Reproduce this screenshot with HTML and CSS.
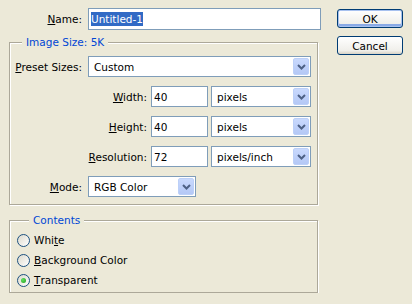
FILE: index.html
```html
<!DOCTYPE html>
<html lang="en">
<head>
  <meta charset="UTF-8">
  <title>New</title>
  <link rel="stylesheet" href="styles.css">
</head>
<body>

  <div class="dialog">
    <div class="main">
      <div class="row name-row">
        <label class="lbl lbl-short"><u>N</u>ame:</label>
        <div class="field name-field"><span class="sel">Untitled-1</span></div>
      </div>

      <fieldset class="group size-group">
        <legend>Image Size: 5K</legend>

        <div class="row">
          <label class="lbl lbl-short"><u>P</u>reset Sizes:</label>
          <div class="combo preset">Custom<span class="drop"><svg width="9" height="6" viewBox="0 0 9 6"><polyline points="1,1 4.5,4.5 8,1" fill="none" stroke="#4D6185" stroke-width="2"/></svg></span></div>
        </div>

        <div class="row">
          <label class="lbl lbl-dim"><u>W</u>idth:</label>
          <div class="field num">40</div>
          <div class="combo unit">pixels<span class="drop"><svg width="9" height="6" viewBox="0 0 9 6"><polyline points="1,1 4.5,4.5 8,1" fill="none" stroke="#4D6185" stroke-width="2"/></svg></span></div>
        </div>

        <div class="row">
          <label class="lbl lbl-dim"><u>H</u>eight:</label>
          <div class="field num">40</div>
          <div class="combo unit">pixels<span class="drop"><svg width="9" height="6" viewBox="0 0 9 6"><polyline points="1,1 4.5,4.5 8,1" fill="none" stroke="#4D6185" stroke-width="2"/></svg></span></div>
        </div>

        <div class="row">
          <label class="lbl lbl-dim"><u>R</u>esolution:</label>
          <div class="field num">72</div>
          <div class="combo unit">pixels/inch<span class="drop"><svg width="9" height="6" viewBox="0 0 9 6"><polyline points="1,1 4.5,4.5 8,1" fill="none" stroke="#4D6185" stroke-width="2"/></svg></span></div>
        </div>

        <div class="row">
          <label class="lbl lbl-short"><u>M</u>ode:</label>
          <div class="combo mode">RGB Color<span class="drop"><svg width="9" height="6" viewBox="0 0 9 6"><polyline points="1,1 4.5,4.5 8,1" fill="none" stroke="#4D6185" stroke-width="2"/></svg></span></div>
        </div>
      </fieldset>

      <fieldset class="group contents-group">
        <legend>Contents</legend>
        <label class="radio"><span class="circle"></span>Whi<u>t</u>e</label>
        <label class="radio"><span class="circle"></span><u>B</u>ackground Color</label>
        <label class="radio"><span class="circle checked"></span><u>T</u>ransparent</label>
      </fieldset>
    </div>

    <div class="buttons">
      <button class="btn default">OK</button>
      <button class="btn">Cancel</button>
    </div>
  </div>

</body>
</html>
```

FILE: styles.css
```css
body {
  margin: 0;
  background-color: #ece9d8;
  font-family: "DejaVu Sans", Tahoma, sans-serif;
  font-size: 10.5px;
  color: #000;
}

.dialog {
  display: flex;
  padding: 8px 0 0 9px;
}

.main {
  width: 312px;
}

.row {
  display: flex;
  align-items: center;
  height: 21px;
}

.name-row {
  height: 22px;
}

.lbl {
  text-align: right;
  margin-right: 6px;
}

.name-row .lbl {
  width: 73px;
}

.lbl-short {
  width: 72px;
}

.lbl-dim {
  width: 137px;
  margin-right: 4px;
}

/* text boxes */
.field {
  box-sizing: border-box;
  display: flex;
  align-items: center;
  height: 21px;
  padding-left: 2px;
  border: 1px solid #7f9db9;
  background: #fff;
}

.name-field {
  width: 233px;
  height: 22px;
}

.sel {
  background: #316ac5;
  color: #fff;
  padding: 1px 0;
}

.num {
  width: 57px;
  margin-right: 3px;
}

/* drop-down lists */
.combo {
  box-sizing: border-box;
  display: flex;
  align-items: center;
  height: 21px;
  padding-left: 5px;
  border: 1px solid #7f9db9;
  background: #fff;
}

.preset {
  width: 223px;
}

.unit {
  width: 100px;
}

.mode {
  width: 108px;
}

.drop {
  box-sizing: border-box;
  display: flex;
  align-items: center;
  justify-content: center;
  width: 16px;
  height: 17px;
  margin-left: auto;
  margin-right: 1px;
  border: 1px solid #bcd0f8;
  border-radius: 2px;
  background: linear-gradient(#c9d9fd, #b4c8f6);
}

/* group boxes */
.group {
  box-sizing: border-box;
  width: 309px;
  min-width: 0;
  margin: 0;
  border: 1px solid #aca899;
  box-shadow: 1px 1px 0 #fff, inset 1px 1px 0 #fff;
}

.group legend {
  position: relative;
  margin-left: 12px;
  padding: 0 4px;
  line-height: 13px;
  color: #0046d5;
  background: #ece9d8;
}

.size-group {
  margin-top: 6px;
  padding: 7px 0;
  display: flex;
  flex-direction: column;
  gap: 9px;
}

.contents-group {
  margin-top: 9px;
  padding: 3px 0 2px 7px;
}

.radio {
  display: flex;
  align-items: center;
  height: 20px;
}

.circle {
  box-sizing: border-box;
  display: flex;
  align-items: center;
  justify-content: center;
  width: 13px;
  height: 13px;
  margin-right: 4px;
  border: 1px solid #1c5180;
  border-radius: 50%;
  background: linear-gradient(135deg, #dcd9cc, #fff);
}

.circle.checked::after {
  content: "";
  width: 5px;
  height: 5px;
  border-radius: 50%;
  background: radial-gradient(circle at 35% 35%, #62e05d, #21a121);
}

/* buttons */
.buttons {
  display: flex;
  flex-direction: column;
  gap: 8px;
  margin-left: 16px;
  padding-top: 1px;
}

.btn {
  box-sizing: border-box;
  width: 66px;
  height: 19px;
  padding: 0;
  border: 1px solid #003c74;
  border-radius: 3px;
  background: linear-gradient(#fff, #f0efea 80%, #d8d3c6);
  font-family: inherit;
  font-size: 10.5px;
  color: #000;
}

.btn.default {
  box-shadow: inset 0 0 0 1px #a7c1ef, inset 0 -2px 0 1px #8aaae6;
}
```
